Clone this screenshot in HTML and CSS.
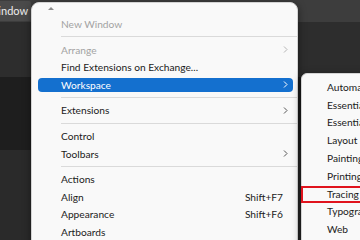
FILE: index.html
```html
<!DOCTYPE html>
<html lang="en">
<head>
  <meta charset="UTF-8">
  <title>Window menu</title>
  <link rel="stylesheet" href="styles.css">
</head>
<body>
  <div class="app">
    <div class="menubar">
      <span class="menubar-item active">Window</span>
    </div>
    <div class="panels">
      <div class="panel panel-top"></div>
      <div class="panel panel-mid"></div>
      <div class="panel panel-bottom"></div>
    </div>
  </div>

  <div class="menu main-menu">
    <div class="scroll-up"><span class="tri"></span></div>
    <div class="item disabled"><span class="label">New Window</span></div>
    <div class="sep"></div>
    <div class="item disabled"><span class="label">Arrange</span>
      <svg class="chev" width="5" height="7" viewBox="0 0 5 7"><polyline points="1,0.5 4,3.5 1,6.5"/></svg>
    </div>
    <div class="item"><span class="label">Find Extensions on Exchange...</span></div>
    <div class="item selected"><span class="label">Workspace</span>
      <svg class="chev" width="5" height="7" viewBox="0 0 5 7"><polyline points="1,0.5 4,3.5 1,6.5"/></svg>
    </div>
    <div class="sep"></div>
    <div class="item"><span class="label">Extensions</span>
      <svg class="chev" width="5" height="7" viewBox="0 0 5 7"><polyline points="1,0.5 4,3.5 1,6.5"/></svg>
    </div>
    <div class="sep"></div>
    <div class="item"><span class="label">Control</span></div>
    <div class="item"><span class="label">Toolbars</span>
      <svg class="chev" width="5" height="7" viewBox="0 0 5 7"><polyline points="1,0.5 4,3.5 1,6.5"/></svg>
    </div>
    <div class="sep"></div>
    <div class="item"><span class="label">Actions</span></div>
    <div class="item"><span class="label">Align</span><span class="shortcut">Shift+F7</span></div>
    <div class="item"><span class="label">Appearance</span><span class="shortcut">Shift+F6</span></div>
    <div class="item"><span class="label">Artboards</span></div>
  </div>

  <div class="menu submenu">
    <div class="item"><span class="label">Automation</span></div>
    <div class="item"><span class="label">Essentials</span></div>
    <div class="item"><span class="label">Essentials Classic</span></div>
    <div class="item"><span class="label">Layout</span></div>
    <div class="item"><span class="label">Painting</span></div>
    <div class="item"><span class="label">Printing</span></div>
    <div class="item marked"><span class="label">Tracing</span></div>
    <div class="item"><span class="label">Typography</span></div>
    <div class="item"><span class="label">Web</span></div>
  </div>
</body>
</html>
```

FILE: styles.css
```css
body {
  margin: 0;
  width: 360px;
  height: 240px;
  overflow: hidden;
  position: relative;
  background: #292929;
  font-family: Lato, 'Noto Sans', sans-serif;
  font-size: 10.2px;
  color: #1b1b1b;
}
.app {
  display: flex;
  flex-direction: column;
  height: 240px;
}
.menubar {
  height: 22px;
  background: #3d3d3d;
  display: flex;
  align-items: center;
}
.menubar-item {
  color: #ececec;
  font-size: 11px;
  padding: 3px 3px 4px 6px;
  margin-left: -19px;
  border-radius: 2px;
}
.menubar-item.active {
  background: #4a4a4a;
}
.panels {
  flex: 1;
  display: flex;
  flex-direction: column;
}
.panel-top {
  height: 55px;
  background: #2d2d2d;
}
.panel-mid {
  height: 73px;
  background: #1e1e1e;
}
.panel-bottom {
  flex: 1;
  background: #2a2a2a;
}

.menu {
  position: absolute;
  background: #f9f9f9;
  border: 1px solid #d4d4d4;
  box-shadow: 0 2px 8px rgba(0, 0, 0, 0.45);
}
.main-menu {
  left: 31px;
  top: 2px;
  width: 265px;
  height: 260px;
  border-radius: 8px;
}
.scroll-up {
  height: 12.2px;
  position: relative;
}
.tri {
  position: absolute;
  left: 16px;
  top: 4px;
  width: 0;
  height: 0;
  border-left: 3px solid transparent;
  border-right: 3px solid transparent;
  border-bottom: 3px solid #8c8c8c;
}
.item {
  height: 17.6px;
  display: flex;
  align-items: center;
  padding: 0 5px 0 23px;
  margin: 0 4px 0 6px;
  position: relative;
  white-space: nowrap;
}
.label {
  flex: 1;
}
.shortcut {
  margin-right: 5px;
}
.chev {
  fill: none;
  stroke: #555;
  stroke-width: 1;
}
.item.disabled {
  color: #a3a3a3;
}
.item.disabled .chev {
  stroke: #b5b5b5;
}
.item.selected {
  color: #fff;
  z-index: 0;
}
.item.selected::before {
  content: "";
  position: absolute;
  left: 0;
  right: 0;
  top: 2.5px;
  bottom: 2px;
  background: #1470cf;
  border-radius: 4px;
  z-index: -1;
}
.item.selected .chev {
  stroke: #fff;
}
.sep {
  height: 1px;
  background: #dadada;
  margin: 3.5px 0 3.5px 29px;
}

.submenu {
  left: 301px;
  top: 73px;
  width: 120px;
  height: 190px;
  padding-top: 4px;
  border-radius: 6px 0 0 6px;
}
.submenu .item {
  height: 17.8px;
  margin: 0;
  padding-left: 25px;
}
.item.marked::after {
  content: "";
  position: absolute;
  left: -1px;
  right: 40px;
  top: 1px;
  bottom: 0;
  border: 2px solid #e0131d;
}
```
